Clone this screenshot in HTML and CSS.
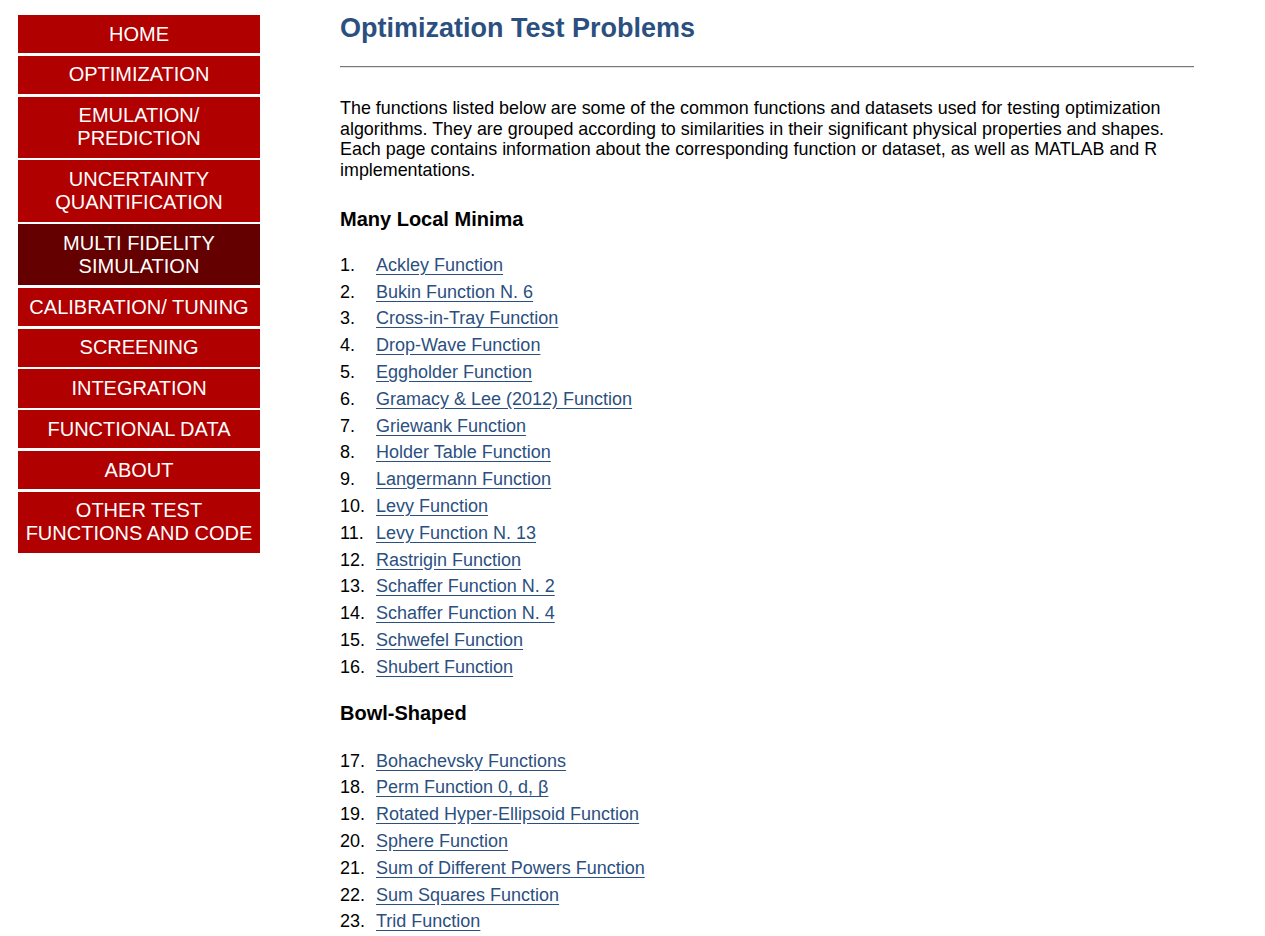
FILE: index.html
```html
<!DOCTYPE html>
<html>
<head>
<meta charset="utf-8">
<title>Optimization Test Problems</title>
<link rel="stylesheet" href="styles.css">
</head>
<body>
<div class="page">
  <nav class="sidebar">
    <a class="navbtn" href="#">HOME</a>
    <a class="navbtn" href="#">OPTIMIZATION</a>
    <a class="navbtn" href="#">EMULATION/<br>PREDICTION</a>
    <a class="navbtn" href="#">UNCERTAINTY<br>QUANTIFICATION</a>
    <a class="navbtn active" href="#">MULTI FIDELITY<br>SIMULATION</a>
    <a class="navbtn" href="#">CALIBRATION/ TUNING</a>
    <a class="navbtn" href="#">SCREENING</a>
    <a class="navbtn" href="#">INTEGRATION</a>
    <a class="navbtn" href="#">FUNCTIONAL DATA</a>
    <a class="navbtn" href="#">ABOUT</a>
    <a class="navbtn" href="#">OTHER TEST<br>FUNCTIONS AND CODE</a>
  </nav>
  <main class="content">
    <h1 class="title">Optimization Test Problems</h1>
    <hr class="rule">
    <p class="intro">The functions listed below are some of the common functions and datasets used for testing optimization algorithms. They are grouped according to similarities in their significant physical properties and shapes. Each page contains information about the corresponding function or dataset, as well as MATLAB and R implementations.</p>

    <h2 class="section">Many Local Minima</h2>
    <ol class="funcs">
      <li><span class="num">1.</span><a href="#">Ackley Function</a></li>
      <li><span class="num">2.</span><a href="#">Bukin Function N. 6</a></li>
      <li><span class="num">3.</span><a href="#">Cross-in-Tray Function</a></li>
      <li><span class="num">4.</span><a href="#">Drop-Wave Function</a></li>
      <li><span class="num">5.</span><a href="#">Eggholder Function</a></li>
      <li><span class="num">6.</span><a href="#">Gramacy &amp; Lee (2012) Function</a></li>
      <li><span class="num">7.</span><a href="#">Griewank Function</a></li>
      <li><span class="num">8.</span><a href="#">Holder Table Function</a></li>
      <li><span class="num">9.</span><a href="#">Langermann Function</a></li>
      <li><span class="num">10.</span><a href="#">Levy Function</a></li>
      <li><span class="num">11.</span><a href="#">Levy Function N. 13</a></li>
      <li><span class="num">12.</span><a href="#">Rastrigin Function</a></li>
      <li><span class="num">13.</span><a href="#">Schaffer Function N. 2</a></li>
      <li><span class="num">14.</span><a href="#">Schaffer Function N. 4</a></li>
      <li><span class="num">15.</span><a href="#">Schwefel Function</a></li>
      <li><span class="num">16.</span><a href="#">Shubert Function</a></li>
    </ol>

    <h2 class="section section-next">Bowl-Shaped</h2>
    <ol class="funcs funcs-next">
      <li><span class="num">17.</span><a href="#">Bohachevsky Functions</a></li>
      <li><span class="num">18.</span><a href="#">Perm Function 0, d, β</a></li>
      <li><span class="num">19.</span><a href="#">Rotated Hyper-Ellipsoid Function</a></li>
      <li><span class="num">20.</span><a href="#">Sphere Function</a></li>
      <li><span class="num">21.</span><a href="#">Sum of Different Powers Function</a></li>
      <li><span class="num">22.</span><a href="#">Sum Squares Function</a></li>
      <li><span class="num">23.</span><a href="#">Trid Function</a></li>
    </ol>
  </main>
</div>
</body>
</html>
```
FILE: styles.css
```css
html, body {
  margin: 0;
  padding: 0;
  background: #ffffff;
}
body {
  font-family: "Liberation Sans", Arial, sans-serif;
  color: #000000;
}
.page {
  display: flex;
  align-items: flex-start;
  padding: 15px 0 0 18px;
}
.sidebar {
  width: 242px;
  flex: none;
  display: flex;
  flex-direction: column;
  gap: 2.6px;
}
.navbtn {
  display: block;
  background: #b00000;
  color: #ffffff;
  text-decoration: none;
  text-align: center;
  font-size: 20px;
  line-height: 23px;
  padding: 7.6px 0;
}
.navbtn.active {
  background: #640000;
}
.content {
  margin-left: 80px;
  width: 854px;
  flex: none;
}
.title {
  margin: -3px 0 0 0;
  font-size: 27px;
  line-height: 32px;
  font-weight: bold;
  color: #2b5080;
}
.rule {
  margin: 22px 0 0 0;
  border: none;
  border-top: 1px solid #777777;
  border-bottom: 1px solid #e4e4e4;
  height: 0;
}
.intro {
  margin: 30px 0 0 0;
  font-size: 17.9px;
  line-height: 20.7px;
}
.section {
  margin: 27px 0 0 0;
  font-size: 20px;
  line-height: 23px;
  font-weight: bold;
}
.section-next {
  margin-top: 21px;
}
.funcs {
  list-style: none;
  margin: 21px 0 0 0;
  padding: 0;
  font-size: 18px;
}
.funcs-next {
  margin-top: 23px;
}
.funcs li {
  display: flex;
  line-height: 26.8px;
}
.num {
  width: 36px;
  flex: none;
}
.funcs a {
  color: #2b5080;
  text-decoration: underline;
  text-underline-offset: 3px;
}
```
